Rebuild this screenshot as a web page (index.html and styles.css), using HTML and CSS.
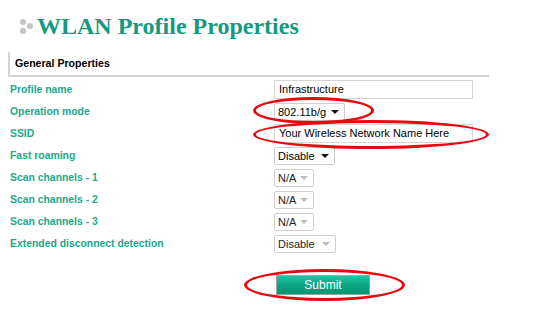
FILE: index.html
```html
<!DOCTYPE html>
<html lang="en">
<head>
    <meta charset="UTF-8">
    <meta name="viewport" content="width=device-width, initial-scale=1.0">
    <title>WLAN Profile Properties</title>
    <link rel="stylesheet" href="styles.css">
</head>
<body>
    <div class="page">
        <h1 class="title">
            <span class="dots"><i class="d1"></i><i class="d2"></i><i class="d3"></i></span>
            WLAN Profile Properties
        </h1>

        <div class="section-head">General Properties</div>

        <form class="props" onsubmit="return false;">
            <label>Profile name</label>
            <div><input class="text" type="text" value="Infrastructure"></div>

            <label>Operation mode</label>
            <div><span class="sel w-mode"><select><option>802.11b/g</option></select></span></div>

            <label>SSID</label>
            <div><input class="text" type="text" value="Your Wireless Network Name Here"></div>

            <label>Fast roaming</label>
            <div><span class="sel w-dis"><select><option>Disable</option></select></span></div>

            <label>Scan channels - 1</label>
            <div><span class="sel w-na off"><select disabled><option>N/A</option></select></span></div>

            <label>Scan channels - 2</label>
            <div><span class="sel w-na off"><select disabled><option>N/A</option></select></span></div>

            <label>Scan channels - 3</label>
            <div><span class="sel w-na off"><select disabled><option>N/A</option></select></span></div>

            <label>Extended disconnect detection</label>
            <div><span class="sel w-dis2 off"><select disabled><option>Disable</option></select></span></div>
        </form>

        <div class="actions">
            <button class="submit" type="button">Submit</button>
        </div>
    </div>

    <!-- red annotation rings drawn over the form -->
    <div class="ring ring-mode"></div>
    <div class="ring ring-ssid"></div>
    <div class="ring ring-submit"></div>
</body>
</html>
```

FILE: styles.css
```css
body {
    margin: 0;
    font-family: "Liberation Sans", Arial, sans-serif;
    background: #fff;
    color: #000;
}
.page {
    padding-left: 8px;
    width: 481px;
}
.title {
    display: flex;
    align-items: center;
    margin: 0;
    padding: 8px 0 0 12px;
    height: 36px;
    font-family: "Liberation Serif", "Times New Roman", serif;
    font-size: 24px;
    font-weight: bold;
    color: #159a80;
}
.dots {
    position: relative;
    display: inline-block;
    width: 16px;
    height: 16px;
    margin-right: 1px;
}
.dots i {
    position: absolute;
    border-radius: 50%;
    background: #c4c4c4;
}
.dots .d1 { left: 0; top: 1px; width: 6px; height: 6px; }
.dots .d2 { left: 7px; top: 5px; width: 6px; height: 6px; }
.dots .d3 { left: 0; top: 10px; width: 6px; height: 6px; }
.section-head {
    margin-top: 8px;
    height: 23px;
    line-height: 23px;
    padding-left: 5px;
    border-left: 2px solid #d4d4d4;
    border-bottom: 2px solid #cfcfcf;
    font-size: 10.6px;
    font-weight: bold;
}
.props {
    display: grid;
    grid-template-columns: 266px 1fr;
    grid-auto-rows: 22px;
    align-items: center;
    margin-top: 1px;
}
.props label {
    padding-left: 2px;
    font-size: 10.4px;
    font-weight: bold;
    color: #1aa88c;
}
.text {
    box-sizing: border-box;
    width: 199px;
    height: 19px;
    padding: 0 4px;
    border: 1px solid #d6d6d6;
    font-family: "Liberation Sans", Arial, sans-serif;
    font-size: 11px;
    color: #000;
    outline: none;
}
.sel {
    position: relative;
    display: inline-block;
    vertical-align: middle;
}
.sel select {
    box-sizing: border-box;
    width: 100%;
    height: 18px;
    padding: 0 0 0 3px;
    border: 1px solid #cfcfcf;
    border-radius: 2px;
    background: #fff;
    font-family: "Liberation Sans", Arial, sans-serif;
    font-size: 11px;
    color: #000;
    -webkit-appearance: none;
    appearance: none;
    opacity: 1;
}
.sel::after {
    content: "";
    position: absolute;
    right: 6px;
    top: 8px;
    border-left: 4px solid transparent;
    border-right: 4px solid transparent;
    border-top: 4px solid #111;
    pointer-events: none;
}
.sel.off::after {
    border-top-color: #bbb;
}
.sel.off select {
    color: #222;
}
.w-mode { width: 71px; }
.w-dis { width: 61px; }
.w-na { width: 40px; }
.w-dis2 { width: 62px; }
.actions {
    padding-left: 268px;
    margin-top: 21px;
}
.submit {
    width: 94px;
    height: 20px;
    border: 1px solid #9aa9a5;
    background: linear-gradient(#20c4a4, #0aa585 50%, #07946f);
    color: #fff;
    font-family: "Liberation Sans", Arial, sans-serif;
    font-size: 12px;
    cursor: pointer;
}
.ring {
    position: absolute;
    border: 3px solid #e8090f;
    border-radius: 50%;
    box-sizing: border-box;
}
.ring-mode { left: 253px; top: 97px; width: 121px; height: 27px; }
.ring-ssid { left: 253px; top: 120px; width: 236px; height: 29px; }
.ring-submit { left: 244px; top: 269px; width: 161px; height: 32px; }
```
